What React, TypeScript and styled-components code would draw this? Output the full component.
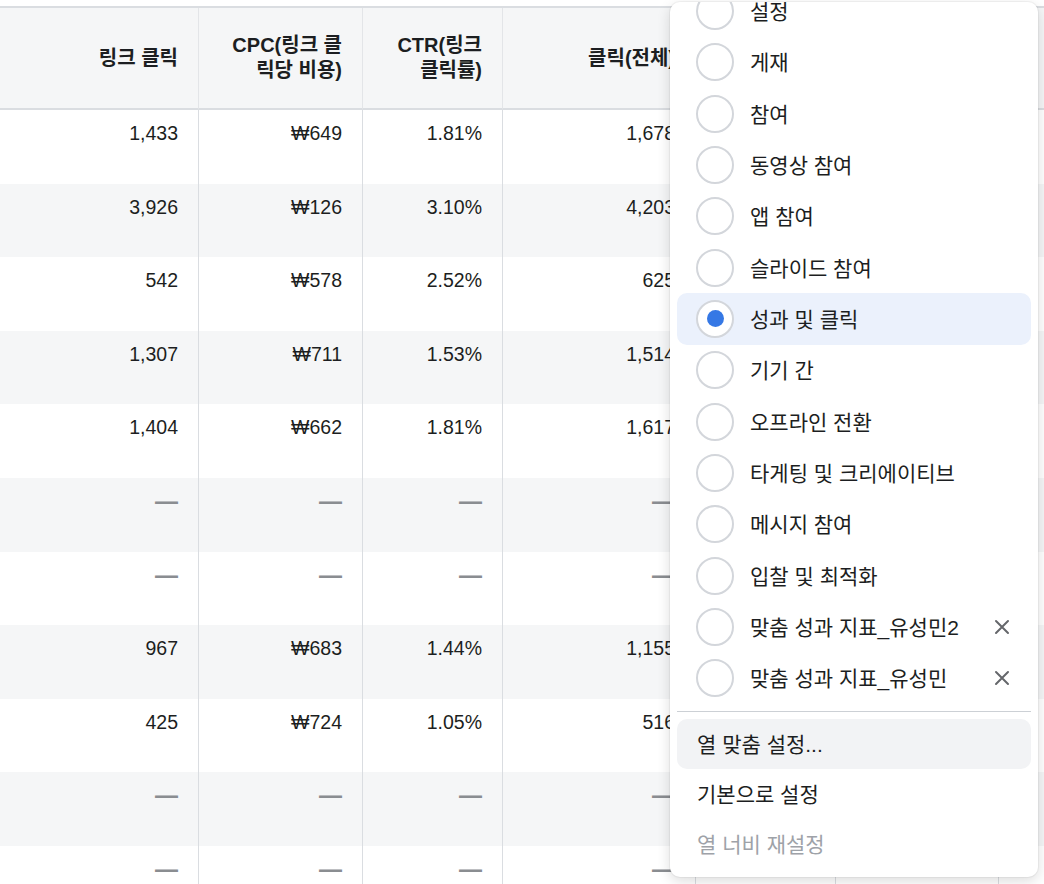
import React from "react";
import styled, { createGlobalStyle } from "styled-components";

const GlobalStyle = createGlobalStyle`
  html, body {
    margin: 0;
    padding: 0;
    background: #ffffff;
    overflow: hidden;
  }
  body {
    font-family: "Liberation Sans", "Noto Sans CJK KR", sans-serif;
    color: #1c1e21;
  }
`;

const Page = styled.div`
  position: relative;
  width: 1044px;
  height: 884px;
  overflow: hidden;
  padding-top: 6px;
  box-sizing: border-box;
`;

const Table = styled.div`
  display: grid;
  grid-template-columns: 9px 190px 164px 140px 193px 140px 163px 120px;
  border-top: 2px solid #dadde1;
`;

const HeaderCell = styled.div`
  box-sizing: border-box;
  height: 102px;
  background: #f5f6f7;
  border-right: 1px solid #e3e5e8;
  border-bottom: 2px solid #dadde1;
  display: flex;
  align-items: center;
  justify-content: flex-end;
  text-align: right;
  padding: 0 20px;
  font-weight: 700;
  font-size: 20px;
  line-height: 25px;
  color: #1c1e21;
  overflow: hidden;
  white-space: nowrap;
`;

const BodyCell = styled.div<{ $striped: boolean }>`
  box-sizing: border-box;
  height: 73.6px;
  background: ${(p) => (p.$striped ? "#f5f6f7" : "#ffffff")};
  border-right: 1px solid #dadde1;
  padding: 11px 20px 0;
  text-align: right;
  font-size: 19.5px;
  line-height: 24px;
  color: #1c1e21;
  overflow: hidden;
  white-space: nowrap;
`;

const EmptyMark = styled.span`
  font-size: 23px;
  font-weight: 700;
  line-height: 24px;
  color: #8a8d91;
`;

const Menu = styled.div`
  position: absolute;
  left: 670px;
  top: 2px;
  width: 368px;
  height: 875px;
  background: #ffffff;
  border-radius: 10px;
  box-shadow: 0 0 0 1px rgba(0, 0, 0, 0.04), 0 4px 14px rgba(0, 0, 0, 0.14);
  display: flex;
  flex-direction: column;
  overflow: hidden;
  font-family: "Liberation Sans", "Noto Sans CJK KR", sans-serif;
`;

const ScrollArea = styled.div`
  height: 702px;
  overflow: hidden;
  flex: none;
`;

const OptionList = styled.div`
  margin-top: -16.67px;
  display: flex;
  flex-direction: column;
`;

const Option = styled.div<{ $active?: boolean }>`
  height: 51.33px;
  margin: 0 7px;
  padding: 0 21px 0 19px;
  border-radius: 10px;
  background: ${(p) => (p.$active ? "#ebf1fc" : "transparent")};
  display: flex;
  align-items: center;
  gap: 16px;
  font-size: 21px;
  color: #1c1e21;
  box-sizing: border-box;
`;

const Radio = styled.span<{ $checked?: boolean }>`
  box-sizing: border-box;
  flex: none;
  width: 38px;
  height: 38px;
  border-radius: 50%;
  border: 2px solid #d3d6db;
  background: #ffffff;
  display: flex;
  align-items: center;
  justify-content: center;

  &::after {
    content: "";
    width: 17px;
    height: 17px;
    border-radius: 50%;
    background: #3578e5;
    display: ${(p) => (p.$checked ? "block" : "none")};
  }
`;

const Label = styled.span`
  flex: 1;
  white-space: nowrap;
  padding-bottom: 2px;
`;

const RemoveButton = styled.span`
  flex: none;
  width: 16px;
  height: 16px;
  display: flex;
  align-items: center;
  justify-content: center;
  color: #65676b;
`;

const Divider = styled.div`
  height: 1px;
  margin: 7px 7px 7px;
  background: #ccd0d5;
  flex: none;
`;

const Action = styled.div<{ $hover?: boolean; $disabled?: boolean }>`
  height: 50px;
  margin: 0 7px;
  padding: 0 20px 3px;
  box-sizing: border-box;
  border-radius: 10px;
  background: ${(p) => (p.$hover ? "#f2f3f5" : "transparent")};
  display: flex;
  align-items: center;
  font-size: 21px;
  color: ${(p) => (p.$disabled ? "#9ea2a8" : "#1c1e21")};
  flex: none;
`;

const CloseIcon = () => (
  <svg width="16" height="16" viewBox="0 0 16 16" fill="none">
    <path d="M2 2 L14 14 M14 2 L2 14" stroke="currentColor" strokeWidth="2" strokeLinecap="round" />
  </svg>
);

const headers: React.ReactNode[] = [
  "",
  "링크 클릭",
  <>
    CPC(링크 클
    <br />
    릭당 비용)
  </>,
  <>
    CTR(링크
    <br />
    클릭률)
  </>,
  "클릭(전체)",
  "",
  "",
  "",
];

const D = "—";
const rows: string[][] = [
  ["1,433", "₩649", "1.81%", "1,678"],
  ["3,926", "₩126", "3.10%", "4,203"],
  ["542", "₩578", "2.52%", "625"],
  ["1,307", "₩711", "1.53%", "1,514"],
  ["1,404", "₩662", "1.81%", "1,617"],
  [D, D, D, D],
  [D, D, D, D],
  ["967", "₩683", "1.44%", "1,155"],
  ["425", "₩724", "1.05%", "516"],
  [D, D, D, D],
  [D, D, D, D],
];

const options: { label: string; checked?: boolean; removable?: boolean }[] = [
  { label: "설정" },
  { label: "게재" },
  { label: "참여" },
  { label: "동영상 참여" },
  { label: "앱 참여" },
  { label: "슬라이드 참여" },
  { label: "성과 및 클릭", checked: true },
  { label: "기기 간" },
  { label: "오프라인 전환" },
  { label: "타게팅 및 크리에이티브" },
  { label: "메시지 참여" },
  { label: "입찰 및 최적화" },
  { label: "맞춤 성과 지표_유성민2", removable: true },
  { label: "맞춤 성과 지표_유성민", removable: true },
];

export default function App() {
  return (
    <>
      <GlobalStyle />
      <Page>
        <Table>
          {headers.map((h, i) => (
            <HeaderCell key={`h${i}`}>{h}</HeaderCell>
          ))}
          {rows.map((r, ri) => {
            const striped = ri % 2 === 1;
            const cells = ["", ...r, "", "", ""];
            return cells.map((c, ci) => (
              <BodyCell key={`r${ri}c${ci}`} $striped={striped}>
                {c === D ? <EmptyMark>{c}</EmptyMark> : c}
              </BodyCell>
            ));
          })}
        </Table>
        <Menu>
          <ScrollArea>
            <OptionList>
              {options.map((o) => (
                <Option key={o.label} $active={o.checked}>
                  <Radio $checked={o.checked} />
                  <Label>{o.label}</Label>
                  {o.removable && (
                    <RemoveButton>
                      <CloseIcon />
                    </RemoveButton>
                  )}
                </Option>
              ))}
            </OptionList>
          </ScrollArea>
          <Divider />
          <Action $hover>열 맞춤 설정...</Action>
          <Action>기본으로 설정</Action>
          <Action $disabled>열 너비 재설정</Action>
        </Menu>
      </Page>
    </>
  );
}
